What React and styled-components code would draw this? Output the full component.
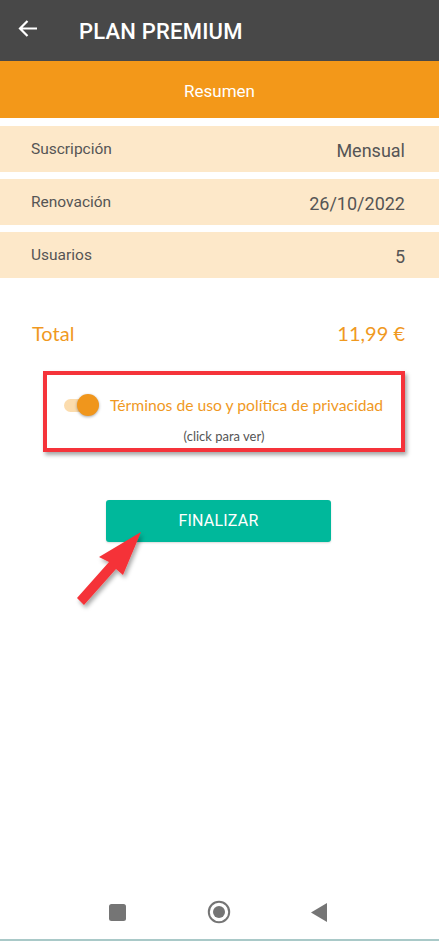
import React from "react";
import styled, { createGlobalStyle } from "styled-components";

const Global = createGlobalStyle`
  html, body { margin: 0; padding: 0; background: #fff; }
  body { font-family: Roboto, "Noto Sans", sans-serif; }
  * { box-sizing: border-box; }
`;

const Screen = styled.div`
  position: relative;
  width: 439px;
  height: 941px;
  display: flex;
  flex-direction: column;
  background: #fff;
  overflow: hidden;
`;

const Header = styled.header`
  height: 61px;
  flex: none;
  background: #484848;
  display: flex;
  align-items: center;
  padding-left: 17px;
  gap: 41px;
  color: #fff;
`;

const BackBtn = styled.div`
  width: 21px;
  height: 21px;
  display: flex;
  align-items: center;
  justify-content: center;
  margin-top: -4px;
`;

const Title = styled.h1`
  margin: 0;
  font-family: Roboto, sans-serif;
  font-weight: 500;
  font-size: 22px;
  letter-spacing: 0.2px;
  margin-top: 1px;
`;

const TabBar = styled.div`
  height: 57px;
  flex: none;
  background: #f39819;
  color: #fff;
  display: flex;
  align-items: center;
  justify-content: center;
  font-size: 17px;
  padding-top: 2px;
`;

const List = styled.div`
  display: flex;
  flex-direction: column;
  gap: 7px;
  padding-top: 8px;
`;

const Row = styled.div`
  height: 46px;
  background: #fde8c9;
  display: flex;
  align-items: center;
  justify-content: space-between;
  padding: 0 34px 0 31px;
  color: #555;
`;

const Label = styled.span`
  font-size: 15.5px;
  margin-top: -1px;
`;

const Value = styled.span`
  font-size: 18px;
  margin-top: 3px;
`;

const TotalRow = styled.div`
  margin-top: 42px;
  display: flex;
  justify-content: space-between;
  align-items: center;
  padding: 0 34px 0 32px;
  font-family: Lato, sans-serif;
  font-size: 20px;
  color: #f0991f;
  height: 26px;
`;

const TermsBox = styled.div`
  margin: 25px 0 0 43px;
  width: 362px;
  height: 81px;
  border: 4px solid #f5333a;
  box-shadow: 2px 3px 4px rgba(0, 0, 0, 0.35);
  display: flex;
  flex-direction: column;
  align-items: center;
  padding-top: 20px;
`;

const ToggleLine = styled.div`
  display: flex;
  align-items: center;
  gap: 12px;
  margin-left: -1px;
`;

const Switch = styled.div`
  position: relative;
  width: 34px;
  height: 20px;
  display: flex;
  align-items: center;
`;

const Track = styled.div`
  width: 30px;
  height: 13px;
  border-radius: 7px;
  background: #fbdcae;
`;

const Knob = styled.div`
  position: absolute;
  right: -1px;
  top: 0;
  width: 22px;
  height: 22px;
  margin-top: -1px;
  border-radius: 50%;
  background: #f0961c;
  box-shadow: 0 1px 3px rgba(0, 0, 0, 0.35);
`;

const TermsText = styled.span`
  font-family: Lato, sans-serif;
  font-size: 15.7px;
  color: #f0991f;
`;

const Hint = styled.div`
  margin-top: 13px;
  font-family: Lato, sans-serif;
  font-size: 13px;
  color: #555;
`;

const Button = styled.button`
  margin: 48px 0 0 106px;
  width: 225px;
  height: 42px;
  border: none;
  border-radius: 3px;
  background: #00b89b;
  color: #fff;
  font-family: Roboto, sans-serif;
  font-size: 16px;
  letter-spacing: 0.2px;
  padding-bottom: 3px;
  box-shadow: 0 1px 2px rgba(0, 0, 0, 0.15);
`;

const Spacer = styled.div`
  flex: 1;
`;

const NavBar = styled.nav`
  height: 48px;
  flex: none;
  display: flex;
  align-items: center;
  justify-content: space-between;
  padding: 0 112px 0 109px;
  border-bottom: 2px solid #a9c9c8;
  padding-bottom: 8px;
`;

const Arrow = styled.svg`
  position: absolute;
  left: 70px;
  top: 525px;
  overflow: visible;
`;

export default function App() {
  return (
    <>
      <Global />
      <Screen>
        <Header>
          <BackBtn>
            <svg width="21" height="19" viewBox="0 0 21 19">
              <path d="M20 9.5H3M10.5 2L3 9.5L10.5 17" stroke="#fff" strokeWidth="2.2" fill="none" />
            </svg>
          </BackBtn>
          <Title>PLAN PREMIUM</Title>
        </Header>
        <TabBar>Resumen</TabBar>
        <List>
          <Row>
            <Label>Suscripción</Label>
            <Value>Mensual</Value>
          </Row>
          <Row>
            <Label>Renovación</Label>
            <Value>26/10/2022</Value>
          </Row>
          <Row>
            <Label>Usuarios</Label>
            <Value>5</Value>
          </Row>
        </List>
        <TotalRow>
          <span>Total</span>
          <span>11,99 €</span>
        </TotalRow>
        <TermsBox>
          <ToggleLine>
            <Switch>
              <Track />
              <Knob />
            </Switch>
            <TermsText>Términos de uso y política de privacidad</TermsText>
          </ToggleLine>
          <Hint>(click para ver)</Hint>
        </TermsBox>
        <Button>FINALIZAR</Button>
        <Spacer />
        <NavBar>
          <svg width="17" height="17" viewBox="0 0 17 17">
            <rect x="0" y="0" width="17" height="17" rx="2.5" fill="#757575" />
          </svg>
          <svg width="24" height="24" viewBox="0 0 24 24">
            <circle cx="12" cy="12" r="10.2" stroke="#757575" strokeWidth="2" fill="none" />
            <circle cx="12" cy="12" r="6" fill="#757575" />
          </svg>
          <svg width="16" height="19" viewBox="0 0 16 19">
            <path d="M16 0V19L0 9.5Z" fill="#757575" />
          </svg>
        </NavBar>
        <Arrow width="80" height="85" viewBox="0 0 80 85">
          <defs>
            <filter id="sh" x="-30%" y="-30%" width="160%" height="160%">
              <feDropShadow dx="2" dy="3" stdDeviation="2" floodColor="#000" floodOpacity="0.35" />
            </filter>
          </defs>
          <polygon
            points="71,7 53,50 46,44 14,80 7,73 39,37 29,32"
            fill="#f53237"
            filter="url(#sh)"
          />
        </Arrow>
      </Screen>
    </>
  );
}
